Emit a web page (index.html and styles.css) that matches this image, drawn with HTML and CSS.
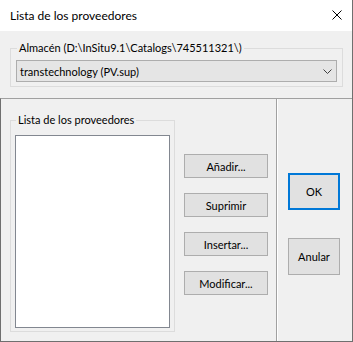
FILE: index.html
```html
<!DOCTYPE html>
<html lang="es">
<head>
<meta charset="utf-8">
<title>Lista de los proveedores</title>
<link rel="stylesheet" href="styles.css">
</head>
<body>
<div class="window">
  <div class="titlebar">
    <span class="title">Lista de los proveedores</span>
    <svg class="close" width="10" height="10" viewBox="0 0 10 10"><path d="M0.5 0.5 L9.5 9.5 M9.5 0.5 L0.5 9.5" stroke="#000" stroke-width="1" fill="none"/></svg>
  </div>
  <div class="top">
    <fieldset class="group store">
      <legend>Almacén (D:\InSitu9.1\Catalogs\745511321\)</legend>
      <div class="combo">
        <span>transtechnology (PV.sup)</span>
        <svg class="chev" width="9" height="5" viewBox="0 0 9 5"><path d="M0.5 0.5 L4.5 4.5 L8.5 0.5" stroke="#404040" stroke-width="1" fill="none"/></svg>
      </div>
    </fieldset>
  </div>
  <div class="lower">
    <div class="left">
      <fieldset class="group list">
        <legend>Lista de los proveedores</legend>
        <div class="listbox"></div>
      </fieldset>
      <div class="actions">
        <button class="btn">Añadir...</button>
        <button class="btn">Suprimir</button>
        <button class="btn">Insertar...</button>
        <button class="btn">Modificar...</button>
      </div>
    </div>
    <div class="right">
      <button class="btn big default">OK</button>
      <button class="btn big">Anular</button>
    </div>
  </div>
</div>
</body>
</html>
```
FILE: styles.css
```css
* { box-sizing: border-box; }
html, body { margin: 0; padding: 0; }
body {
  font-family: Lato, "Noto Sans", sans-serif;
  font-size: 11px;
  color: #000;
  background: #f0f0f0;
}
.window {
  width: 353px;
  height: 342px;
  background: #f0f0f0;
  border-right: 1px solid #6f6f6f;
  border-bottom: 1px solid #6f6f6f;
  display: flex;
  flex-direction: column;
}
.titlebar {
  height: 31px;
  background: #fff;
  display: flex;
  align-items: center;
  justify-content: space-between;
  padding: 0 10px 0 10px;
}
.title { font-size: 12px; line-height: 16px; }
.close { display: block; margin-top: -1px; }
.top {
  height: 67px;
  padding: 9px 9px 0 10px;
}
.group {
  margin: 0;
  border: 1px solid #dcdcdc;
  min-width: 0;
}
.group legend {
  padding: 0 2px;
  margin-left: 1px;
  line-height: 16px;
  height: 16px;
}
.store {
  padding: 4px 5px 4px 5px;
}
.combo {
  height: 22px;
  border: 1px solid #adadad;
  background: #e5e5e5;
  display: flex;
  align-items: center;
  justify-content: space-between;
  padding: 0 4px 0 3px;
}
.chev { display: block; }
.lower {
  flex: 1;
  display: flex;
  border-top: 1px solid #a0a0a0;
  border-left: 1px solid #6f6f6f;
}
.left {
  width: 276px;
  display: flex;
  align-items: flex-start;
  padding: 13px 0 0 9px;
  border-right: 1px solid #a0a0a0;
}
.list {
  width: 165px;
  padding: 7px 4px 3px 4px;
}
.listbox {
  height: 193px;
  background: #fff;
  border: 1px solid #828790;
}
.actions {
  display: flex;
  flex-direction: column;
  gap: 15px;
  margin-left: 9px;
  padding-top: 42px;
}
.btn {
  font: inherit;
  color: #000;
  width: 84px;
  height: 24px;
  background: #e1e1e1;
  border: 1px solid #adadad;
  border-radius: 0;
  padding: 0;
  margin: 0;
}
.right {
  flex: 1;
  border-left: 1px solid #fff;
  display: flex;
  flex-direction: column;
  gap: 28px;
  padding: 74px 0 0 10px;
}
.big {
  width: 52px;
  height: 37px;
}
.default {
  border: 2px solid #0078d7;
}
```
